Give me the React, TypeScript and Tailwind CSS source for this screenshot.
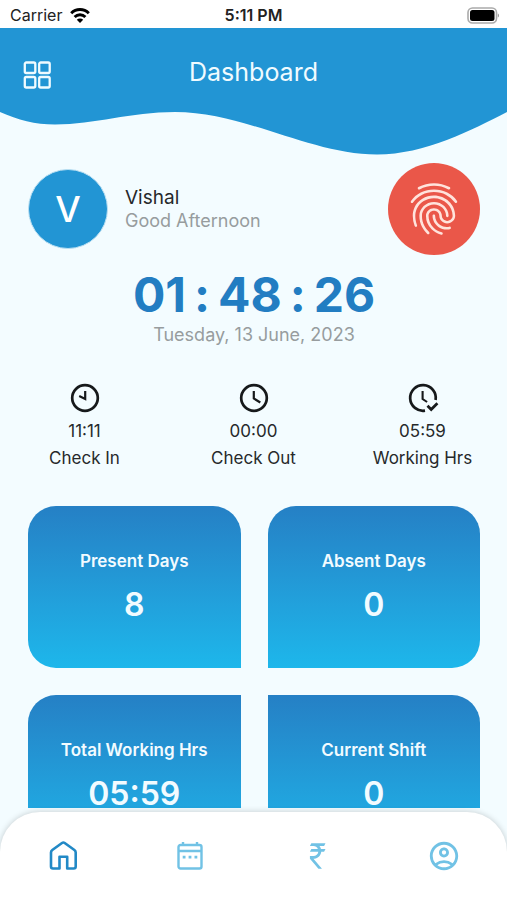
import React from 'react';
import { MdFingerprint, MdOutlineAccountCircle } from 'react-icons/md';

const times = [
  { label: 'Check In', value: '11:11', kind: 'in' },
  { label: 'Check Out', value: '00:00', kind: 'out' },
  { label: 'Working Hrs', value: '05:59', kind: 'total' },
];

const stats = [
  { label: 'Present Days', value: '8', corners: 'rounded-t-[28px] rounded-bl-[28px]' },
  { label: 'Absent Days', value: '0', corners: 'rounded-t-[28px] rounded-br-[28px]' },
  { label: 'Total Working Hrs', value: '05:59', corners: 'rounded-l-[28px] rounded-br-[28px]' },
  { label: 'Current Shift', value: '0', corners: 'rounded-r-[28px] rounded-bl-[28px]' },
];

const StatusBar = () => (
  <div className="grid h-7 shrink-0 grid-cols-3 items-center bg-white px-2 pt-[2px] text-[16px] leading-6 text-[#222]">
    <div className="flex items-center gap-2 pl-[2px]">
      <span>Carrier</span>
      <svg width="20" height="15" viewBox="0 0 20 15" fill="none" stroke="#000" strokeWidth="3">
        <path d="M1.2 5.2a12.6 12.6 0 0 1 17.6 0" />
        <path d="M4.6 9a7.8 7.8 0 0 1 10.8 0" />
        <path d="M10 15 6.8 11.7a4.6 4.6 0 0 1 6.4 0z" fill="#000" stroke="none" />
      </svg>
    </div>
    <span className="text-center font-semibold">5:11 PM</span>
    <svg className="justify-self-end" width="32" height="17" viewBox="0 0 32 17">
      <rect x="1" y="1" width="28.5" height="15" rx="4.5" fill="#fff" stroke="#aaa" strokeWidth="1.6" />
      <rect x="3" y="3" width="24.5" height="11" rx="2.5" fill="#000" />
      <path d="M30.8 6.5c1.6.8 1.6 3.2 0 4z" fill="#999" />
    </svg>
  </div>
);

const Header = () => (
  <header className="shrink-0">
    <div className="grid h-[84px] grid-cols-[1fr_auto_1fr] items-center bg-[#2295d4] px-[22px] pt-1 text-[#f0fbff]">
      <button aria-label="Menu" className="mt-1.5 w-fit">
        <svg width="30" height="30" viewBox="0 0 30 30" fill="none" stroke="currentColor" strokeWidth="2.3">
          <rect x="2.8" y="2.5" width="10.5" height="10.5" rx="1.5" />
          <rect x="17.2" y="2.5" width="10.5" height="10.5" rx="1.5" />
          <rect x="2.8" y="17" width="10.5" height="10.5" rx="1.5" />
          <rect x="17.2" y="17" width="10.5" height="10.5" rx="1.5" />
        </svg>
      </button>
      <h1 className="text-[25px] leading-8">Dashboard</h1>
    </div>
    <svg className="block h-11 w-full" viewBox="0 0 507 44" preserveAspectRatio="none" fill="#2295d4">
      <path d="M0 0C18 8 35 12.5 55 12.5C95 12.5 130 0 175 0C245 0 310 42.5 377 42.5C425 42.5 472 18 507 0z" />
    </svg>
  </header>
);

const ClockIcon = ({ kind }: { kind: string }) => (
  <svg width="32" height="32" viewBox="0 0 32 32" fill="none" stroke="#16191b" strokeWidth="2.7">
    {kind === 'in' && (
      <>
        <circle cx="16" cy="16" r="12.8" />
        <path d="M16.2 9v8l-6-3" strokeWidth="2.2" />
      </>
    )}
    {kind === 'out' && (
      <>
        <circle cx="16" cy="16" r="12.8" />
        <path d="M15.8 9v7.5l6.5 4" strokeWidth="2.2" />
      </>
    )}
    {kind === 'total' && (
      <>
        <path d="M18 28.6A12.8 12.8 0 1 1 28.6 18" />
        <path d="M15.6 9v8l4.5 3" strokeWidth="2.1" />
        <path d="m20.5 23.8 3.7 3.7 6.2-6.2" strokeWidth="2.8" />
      </>
    )}
  </svg>
);

const HomeIcon = () => (
  <svg width="32" height="32" viewBox="0 0 32 32" fill="none" stroke="currentColor" strokeWidth="2.6" strokeLinejoin="round">
    <path d="M4 12.5c0-1 .5-1.9 1.3-2.5L15 3c.8-.6 1.9-.6 2.7 0l9.7 7c.8.6 1.3 1.5 1.3 2.5v14a2 2 0 0 1-2 2h-6.5V16.8h-7.7v11.7H6a2 2 0 0 1-2-2z" />
  </svg>
);

const CalendarIcon = () => (
  <svg width="32" height="32" viewBox="0 0 32 32" fill="none" stroke="currentColor" strokeWidth="2.4">
    <rect x="4.5" y="5" width="23" height="23.5" rx="2" />
    <path d="M4.5 11h23M9 2v4M23 2v4" />
    <path d="M8.7 17.2h2.8M14.6 17.2h2.8M20.5 17.2h2.8" strokeWidth="2.8" />
  </svg>
);

const RupeeIcon = () => (
  <svg width="34" height="34" viewBox="0 0 24 24" fill="currentColor">
    <path d="M8 3h10l-1 2h-3.26c.48.58.84 1.26 1.05 2H18l-1 2h-2c-.25 2.57-2.26 4.63-4.8 4.96V14h-.7l6 7H13l-6-7v-2h2.5c1.76 0 3.22-1.3 3.46-3H7l1-2h4.66C12.1 5.82 10.9 5 9.5 5H7z" />
  </svg>
);

const BottomNav = () => (
  <nav className="mt-1 grid h-[88px] shrink-0 grid-cols-4 items-center rounded-t-[40px] bg-white text-[#71c2e5] shadow-[0_0_6px_rgba(0,0,0,0.2)]">
    <button aria-label="Home" className="flex justify-center text-[#2289c6]">
      <HomeIcon />
    </button>
    <button aria-label="Calendar" className="flex justify-center">
      <CalendarIcon />
    </button>
    <button aria-label="Salary" className="flex justify-center">
      <RupeeIcon />
    </button>
    <button aria-label="Profile" className="flex justify-center">
      <MdOutlineAccountCircle size={34} />
    </button>
  </nav>
);

const App = () => {
  return (
    <div className="flex h-screen flex-col overflow-hidden bg-[#f3fcff] font-['Inter','Liberation_Sans',sans-serif] text-[#26292b]">
      <StatusBar />
      <Header />
      <main className="min-h-0 flex-1 overflow-hidden pl-7 pr-[27px] pt-[7px]">
        <section className="flex items-center">
          <div className="flex size-20 items-center justify-center rounded-full border border-[#b9dff2] bg-[#2295d4] text-[36px] font-medium text-white">
            V
          </div>
          <div className="ml-[17px] flex-1 text-[19px] leading-[23px]">
            <p>Vishal</p>
            <p className="text-[18px] text-[#979c9e]">Good Afternoon</p>
          </div>
          <button
            aria-label="Check in with fingerprint"
            className="flex size-[92px] items-center justify-center rounded-full bg-[#ea5749] text-[#ffe3dc]"
          >
            <MdFingerprint size={62} />
          </button>
        </section>

        <section className="mt-[15px] text-center">
          <p className="flex justify-center gap-2 text-[48px] font-bold leading-[50px] text-[#227dc2]">
            <span>01</span>
            <span>:</span>
            <span>48</span>
            <span>:</span>
            <span>26</span>
          </p>
          <p className="text-[18px] leading-[30px] text-[#979c9e]">Tuesday, 13 June, 2023</p>
        </section>

        <section className="-ml-7 -mr-[27px] mt-8 grid grid-cols-3 text-center text-[17px] leading-[27px]">
          {times.map((time) => (
            <div key={time.label} className="flex flex-col items-center">
              <ClockIcon kind={time.kind} />
              <p className="mt-1">{time.value}</p>
              <p>{time.label}</p>
            </div>
          ))}
        </section>

        <section className="mt-[34px] grid grid-cols-2 gap-[27px]">
          {stats.map((stat) => (
            <div
              key={stat.label}
              className={`flex h-[162px] flex-col items-center bg-linear-to-b from-[#2580c5] to-[#1db7eb] pt-[43px] text-[#f2fbff] ${stat.corners}`}
            >
              <p className="text-[17px] font-semibold leading-6">{stat.label}</p>
              <p className="mt-3 text-[32px] font-semibold leading-10">{stat.value}</p>
            </div>
          ))}
        </section>
      </main>
      <BottomNav />
    </div>
  );
};

export default App;
